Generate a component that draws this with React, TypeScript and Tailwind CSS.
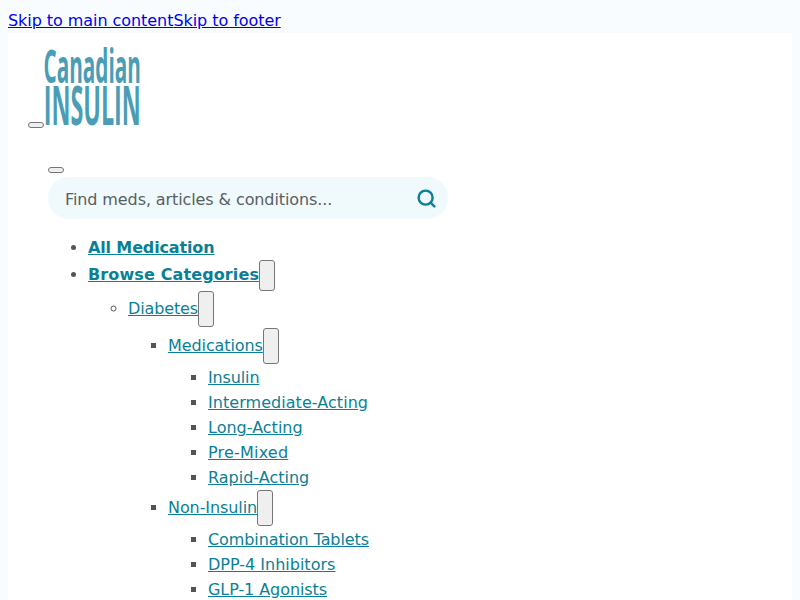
import { Search } from "lucide-react";

type NavItem = { label: string; fit?: string; btn?: boolean; items?: NavItem[] };

// fit = small tracking nudges so the link widths line up with the reference
const diabetes: NavItem[] = [
  {
    label: "Medications",
    fit: "tracking-[-0.09px]",
    btn: true,
    items: [
      { label: "Insulin", fit: "tracking-[-0.14px]" },
      { label: "Intermediate-Acting", fit: "tracking-[0.05px]" },
      { label: "Long-Acting" },
      { label: "Pre-Mixed", fit: "tracking-[0.2px]" },
      { label: "Rapid-Acting" },
    ],
  },
  {
    label: "Non-Insulin",
    fit: "tracking-[-0.09px]",
    btn: true,
    items: [
      { label: "Combination Tablets", fit: "tracking-[-0.1px]" },
      { label: "DPP-4 Inhibitors" },
      { label: "GLP-1 Agonists", fit: "tracking-[-0.07px]" },
    ],
  },
];

const ToggleButton = ({ tall }: { tall?: boolean }) => (
  <button
    className={`inline-block w-4 align-middle rounded-[3px] border border-[#767676] bg-[#efefef] ${
      tall ? "mb-px h-9" : "h-[31px]"
    }`}
  />
);

const Branch = ({ items }: { items: NavItem[] }) => (
  <ul className="list-[square] pl-10">
    {items.map((item) => (
      <li key={item.label} className="leading-[25px]">
        <a href="#" className={`text-[#0b7f95] underline ${item.fit ?? ""}`}>
          {item.label}
        </a>
        {item.btn && <ToggleButton tall />}
        {item.items && <Branch items={item.items} />}
      </li>
    ))}
  </ul>
);

const App = () => {
  return (
    <div className="h-[600px] overflow-hidden bg-[#f8fcff] px-2 pt-2 font-['DejaVu_Sans',sans-serif] text-base text-[#555555]">
      <div className="h-[25px] leading-[25px] tracking-[-0.06px]">
        <a href="#" className="text-[#0000ee] underline">
          Skip to main content
        </a>
        <a href="#" className="text-[#0000ee] underline">
          Skip to footer
        </a>
      </div>

      <div className="h-full bg-white">
        {/* Logo row */}
        <div className="flex items-end pl-5 pt-[13px]">
          <button className="mb-[-3px] h-1.5 w-4 rounded-[3px] border border-[#767676] bg-[#efefef]" />
          <div className="flex w-24 flex-col items-center font-['Open_Sans',sans-serif] font-bold text-[#4a9db5]">
            <span className="scale-x-[0.45] whitespace-nowrap text-[46px] leading-[38px]">
              Canadian
            </span>
            <span className="scale-x-[0.44] whitespace-nowrap text-[53px] leading-[41px]">
              INSULIN
            </span>
          </div>
        </div>

        <div className="pl-10 pt-[42px]">
          <button className="block h-1.5 w-4 rounded-[3px] border border-[#767676] bg-[#efefef]" />

          <div className="mt-1 flex h-[42px] w-[400px] items-center justify-between rounded-full bg-[#f0f9fc] pl-[17px] pr-[11px]">
            <span className="pt-1 tracking-[-0.1px] text-[#595f63]">Find meds, articles &amp; conditions...</span>
            <Search size={21} strokeWidth={2.8} className="text-[#0b7f95]" />
          </div>

          <ul className="mt-4 list-disc pl-10 text-[#555555]">
            <li className="leading-[25px]">
              <a href="#" className="font-bold tracking-[-0.14px] text-[#0b7f95] underline">
                All Medication
              </a>
            </li>
            <li className="leading-[25px]">
              <a href="#" className="font-bold tracking-[0.12px] text-[#0b7f95] underline">
                Browse Categories
              </a>
              <ToggleButton />
              <ul className="list-[circle] pl-10">
                <li className="leading-[25px]">
                  <a href="#" className="tracking-[-0.12px] text-[#0b7f95] underline">
                    Diabetes
                  </a>
                  <ToggleButton tall />
                  <Branch items={diabetes} />
                </li>
              </ul>
            </li>
          </ul>
        </div>
      </div>
    </div>
  );
};

export default App;
